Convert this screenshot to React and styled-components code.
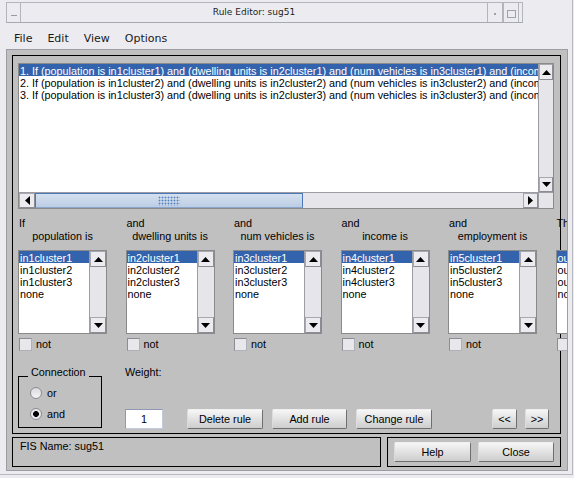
import React from "react";
import styled, { createGlobalStyle } from "styled-components";

const ui = `"Liberation Sans", Arial, sans-serif`;
const wm = `"DejaVu Sans", "Liberation Sans", sans-serif`;

const GlobalStyle = createGlobalStyle`
  html, body { margin: 0; padding: 0; background: #ececf0; }
  body { font-family: ${ui}; font-size: 10.8px; color: #000; }
  * { box-sizing: border-box; }
`;

const rules = [1, 2, 3].map(
  (n) =>
    `${n}. If (population is in1cluster${n}) and (dwelling units is in2cluster${n}) and (num vehicles is in3cluster${n}) and (income is in4cluster${n}) and (employment is in5cluster${n}) then (output is out1cluster${n}) (1)`
);

const clusters = (prefix) => [`${prefix}cluster1`, `${prefix}cluster2`, `${prefix}cluster3`, "none"];

const variables = [
  { lead: "If", name: "population is", items: clusters("in1") },
  { lead: "and", name: "dwelling units is", items: clusters("in2") },
  { lead: "and", name: "num vehicles is", items: clusters("in3") },
  { lead: "and", name: "income is", items: clusters("in4") },
  { lead: "and", name: "employment is", items: clusters("in5") },
  { lead: "Then", name: "output is", items: clusters("out1") },
];

const Arrow = ({ dir }) => {
  const paths = {
    up: "M4.5 0L9 5H0z",
    down: "M0 0H9L4.5 5z",
    left: "M5 0V9L0 4.5z",
    right: "M0 0L5 4.5L0 9z",
  };
  const vertical = dir === "up" || dir === "down";
  return (
    <svg width={vertical ? 9 : 5} height={vertical ? 5 : 9} viewBox={vertical ? "0 0 9 5" : "0 0 5 9"}>
      <path d={paths[dir]} fill="#000" />
    </svg>
  );
};

export default function App() {
  return (
    <>
      <GlobalStyle />
      <Window>
        <TitleBar>
          <WmButton $w={14} $left={false}>
            <Dash />
          </WmButton>
          <Title>Rule Editor: sug51</Title>
          <WmButton $w={16} $left>
            <Dot />
          </WmButton>
          <WmButton $w={16} $left>
            <MaxBox />
          </WmButton>
          <WmSpacer />
        </TitleBar>

        <MenuBar>
          <MenuItem>File</MenuItem>
          <MenuItem>Edit</MenuItem>
          <MenuItem>View</MenuItem>
          <MenuItem>Options</MenuItem>
        </MenuBar>

        <Panel>
          <Frame>
            <RulesBox>
              <RuleLines>
                {rules.map((r, i) => (
                  <Row key={i} $selected={i === 0}>
                    {r}
                  </Row>
                ))}
              </RuleLines>
              <VScroll>
                <ArrowButton $h={16}>
                  <Arrow dir="up" />
                </ArrowButton>
                <Track />
                <ArrowButton $h={15}>
                  <Arrow dir="down" />
                </ArrowButton>
              </VScroll>
              <HScroll>
                <ArrowButton $w={16}>
                  <Arrow dir="left" />
                </ArrowButton>
                <HTrack>
                  <Thumb>
                    <Grip />
                  </Thumb>
                </HTrack>
                <ArrowButton $w={15}>
                  <Arrow dir="right" />
                </ArrowButton>
              </HScroll>
              <Corner />
            </RulesBox>

            <Variables>
              {variables.map((v) => (
                <Column key={v.name}>
                  <Lead>{v.lead}</Lead>
                  <VarName>{v.name}</VarName>
                  <ListBox>
                    <Items>
                      {v.items.map((it, i) => (
                        <Item key={it} $selected={i === 0}>
                          {it}
                        </Item>
                      ))}
                    </Items>
                    <VScroll>
                      <ArrowButton $h={16}>
                        <Arrow dir="up" />
                      </ArrowButton>
                      <Track />
                      <ArrowButton $h={16}>
                        <Arrow dir="down" />
                      </ArrowButton>
                    </VScroll>
                  </ListBox>
                  <NotRow>
                    <Checkbox />
                    <span>not</span>
                  </NotRow>
                </Column>
              ))}
            </Variables>

            <Controls>
              <Group>
                <GroupTitle>Connection</GroupTitle>
                <RadioRow>
                  <Radio />
                  <span>or</span>
                </RadioRow>
                <RadioRow>
                  <Radio $checked />
                  <span>and</span>
                </RadioRow>
              </Group>
              <WeightCol>
                <span>Weight:</span>
                <WeightInput>1</WeightInput>
              </WeightCol>
              <ActionButtons>
                <Button $w={76}>Delete rule</Button>
                <Button $w={75}>Add rule</Button>
                <Button $w={76}>Change rule</Button>
              </ActionButtons>
              <NavButtons>
                <Button $w={25}>&lt;&lt;</Button>
                <Button $w={24}>&gt;&gt;</Button>
              </NavButtons>
            </Controls>
          </Frame>

          <BottomRow>
            <FisBox>FIS Name: sug51</FisBox>
            <HelpBox>
              <Button $w={77}>Help</Button>
              <Button $w={76}>Close</Button>
            </HelpBox>
          </BottomRow>
        </Panel>
      </Window>
    </>
  );
}

const Window = styled.div`
  width: 573px;
  height: 475px;
  border-right: 1px solid #b8b8c0;
  border-bottom: 1px solid #b8b8c0;
  display: flex;
  flex-direction: column;
  overflow: hidden;
`;

const TitleBar = styled.div`
  display: flex;
  height: 21px;
  margin: 2px 49px 0 6px;
  border: 1px solid #b4b4bc;
  border-bottom-color: #a8a8b0;
`;

const WmButton = styled.div`
  width: ${(p) => p.$w}px;
  border-right: 1px solid #b4b4bc;
  border-left: ${(p) => (p.$left ? "1px solid #b4b4bc" : "none")};
  display: flex;
  align-items: center;
  justify-content: center;
  padding-top: 2px;
`;

const WmSpacer = styled.div`
  width: 3px;
`;

const Dash = styled.div`
  width: 6px;
  height: 1px;
  background: #9a9aa2;
  margin-top: 3px;
`;

const Dot = styled.div`
  width: 2px;
  height: 2px;
  background: #a0a0a8;
`;

const MaxBox = styled.div`
  width: 9px;
  height: 8px;
  border: 1px solid #a0a0a8;
`;

const Title = styled.div`
  flex: 1;
  text-align: center;
  font: 9px ${wm};
  color: #1c1c1c;
  padding-top: 4px;
`;

const MenuBar = styled.div`
  height: 26px;
  display: flex;
  align-items: center;
  gap: 15px;
  padding: 4px 0 0 14px;
  font: 11px ${wm};
  color: #1a1a1a;
`;

const MenuItem = styled.span``;

const Panel = styled.div`
  margin-left: 6px;
  width: 562px;
  height: 422px;
  flex: none;
  background: #c0c0c0;
  border: 1px solid #9c9ca4;
  padding: 5px 6px 3px 5px;
  display: flex;
  flex-direction: column;
  overflow: hidden;
`;

const Frame = styled.div`
  height: 379px;
  flex: none;
  border: 1px solid #000;
  padding: 7px 6px 0 5px;
  display: flex;
  flex-direction: column;
`;

const RulesBox = styled.div`
  height: 146px;
  flex: none;
  border: 1px solid #8a8a8a;
  background: #fff;
  display: grid;
  grid-template-columns: minmax(0, 1fr) 15px;
  grid-template-rows: minmax(0, 1fr) 16px;
`;

const RuleLines = styled.div`
  overflow: hidden;
  padding-left: 1px;
`;

const Row = styled.div`
  height: 12px;
  line-height: 14px;
  white-space: nowrap;
  margin-left: -1px;
  padding-left: 1px;
  background: ${(p) => (p.$selected ? "#3463ae" : "transparent")};
  color: ${(p) => (p.$selected ? "#fff" : "#000")};
`;

const VScroll = styled.div`
  display: flex;
  flex-direction: column;
  background: #e6e6ea;
  border-left: 1px solid #9c9ca4;
`;

const ArrowButton = styled.div`
  flex: none;
  ${(p) => (p.$h ? `height: ${p.$h}px;` : "")}
  ${(p) => (p.$w ? `width: ${p.$w}px;` : "")}
  background: #ececf0;
  border: 1px solid #a8a8b0;
  border-right-color: #8c8c94;
  border-bottom-color: #8c8c94;
  display: flex;
  align-items: center;
  justify-content: center;
`;

const Track = styled.div`
  flex: 1;
  background: #e6e6ea;
`;

const HScroll = styled.div`
  display: flex;
  background: #e6e6ea;
  border-top: 1px solid #9c9ca4;
`;

const HTrack = styled.div`
  flex: 1;
  display: flex;
  background: #e6e6ea;
`;

const Thumb = styled.div`
  width: 268px;
  background: linear-gradient(#d4e0ef, #bccde4);
  border: 1px solid #4a78b8;
  border-bottom-color: #8aa6cc;
  display: flex;
  align-items: center;
  justify-content: center;
`;

const Grip = styled.div`
  width: 22px;
  height: 10px;
  background-image: radial-gradient(circle, #5080c0 0.8px, transparent 1.1px);
  background-size: 3px 3px;
`;

const Corner = styled.div`
  background: #e6e6ea;
  border-top: 1px solid #9c9ca4;
  border-left: 1px solid #9c9ca4;
`;

const Variables = styled.div`
  display: grid;
  grid-template-columns: repeat(6, 89px);
  column-gap: 18.5px;
  margin-top: 8px;
`;

const Column = styled.div`
  display: flex;
  flex-direction: column;
`;

const Lead = styled.div`
  height: 13px;
  line-height: 13px;
  padding-left: 1px;
  white-space: nowrap;
`;

const VarName = styled.div`
  height: 13px;
  line-height: 13px;
  text-align: center;
  white-space: nowrap;
`;

const ListBox = styled.div`
  margin-top: 7px;
  height: 84px;
  border: 1px solid #8a8a8a;
  background: #fff;
  display: grid;
  grid-template-columns: minmax(0, 1fr) 17px;
`;

const Items = styled.div`
  overflow: hidden;
`;

const Item = styled.div`
  height: 12px;
  line-height: 14px;
  padding-left: 1px;
  white-space: nowrap;
  background: ${(p) => (p.$selected ? "#3463ae" : "transparent")};
  color: ${(p) => (p.$selected ? "#fff" : "#000")};
`;

const NotRow = styled.div`
  margin-top: 4px;
  display: flex;
  align-items: center;
  gap: 4px;
  padding-left: 1px;
  line-height: 13px;
`;

const Checkbox = styled.div`
  width: 13px;
  height: 13px;
  background: #e8e8ec;
  border: 1px solid #8c8c94;
  border-right-color: #b0b0b8;
  border-bottom-color: #b0b0b8;
`;

const Controls = styled.div`
  margin-top: auto;
  display: flex;
  align-items: flex-end;
  padding: 0 5px 4px 0;
  line-height: 13px;
`;

const Group = styled.div`
  position: relative;
  width: 84px;
  height: 52px;
  margin-bottom: 1px;
  border: 1px solid #000;
  padding: 10px 0 0 11px;
  display: flex;
  flex-direction: column;
  gap: 9px;
`;

const GroupTitle = styled.span`
  position: absolute;
  top: -11px;
  left: 9px;
  padding: 0 3px;
  background: #c0c0c0;
`;

const RadioRow = styled.div`
  display: flex;
  align-items: center;
  gap: 5px;
  height: 12px;
`;

const Radio = styled.div`
  width: 12px;
  height: 12px;
  border-radius: 50%;
  border: 1px solid #8a8a92;
  background: ${(p) =>
    p.$checked
      ? "radial-gradient(circle, #000 2.6px, #e8e8ec 3.2px)"
      : "linear-gradient(#dcdce0, #f4f4f6)"};
`;

const WeightCol = styled.div`
  margin-left: 23px;
  display: flex;
  flex-direction: column;
`;

const WeightInput = styled.div`
  margin-top: 30px;
  width: 38px;
  height: 20px;
  background: #fff;
  border: 1px solid #8e98b4;
  border-right-color: #c4cadc;
  border-bottom-color: #c4cadc;
  text-align: center;
  line-height: 18px;
`;

const ActionButtons = styled.div`
  margin-left: 24px;
  display: flex;
  gap: 9px;
`;

const NavButtons = styled.div`
  margin-left: auto;
  display: flex;
  gap: 8px;
`;

const Button = styled.button`
  width: ${(p) => p.$w}px;
  height: 20px;
  padding: 0;
  font: 10.8px ${ui};
  color: #000;
  background: linear-gradient(#f6f6f6, #cdcdcd);
  border: 1px solid;
  border-color: #f0f0f0 #6e6e6e #6e6e6e #dcdcdc;
  border-radius: 2px;
  white-space: nowrap;
`;

const BottomRow = styled.div`
  margin-top: 3px;
  height: 30px;
  flex: none;
  display: flex;
  gap: 6px;
`;

const FisBox = styled.div`
  width: 370px;
  border: 1px solid #000;
  padding: 2px 7px;
  line-height: 13px;
`;

const HelpBox = styled.div`
  flex: 1;
  border: 1px solid #000;
  display: flex;
  align-items: center;
  padding: 0 6px;
  gap: 7px;
`;
